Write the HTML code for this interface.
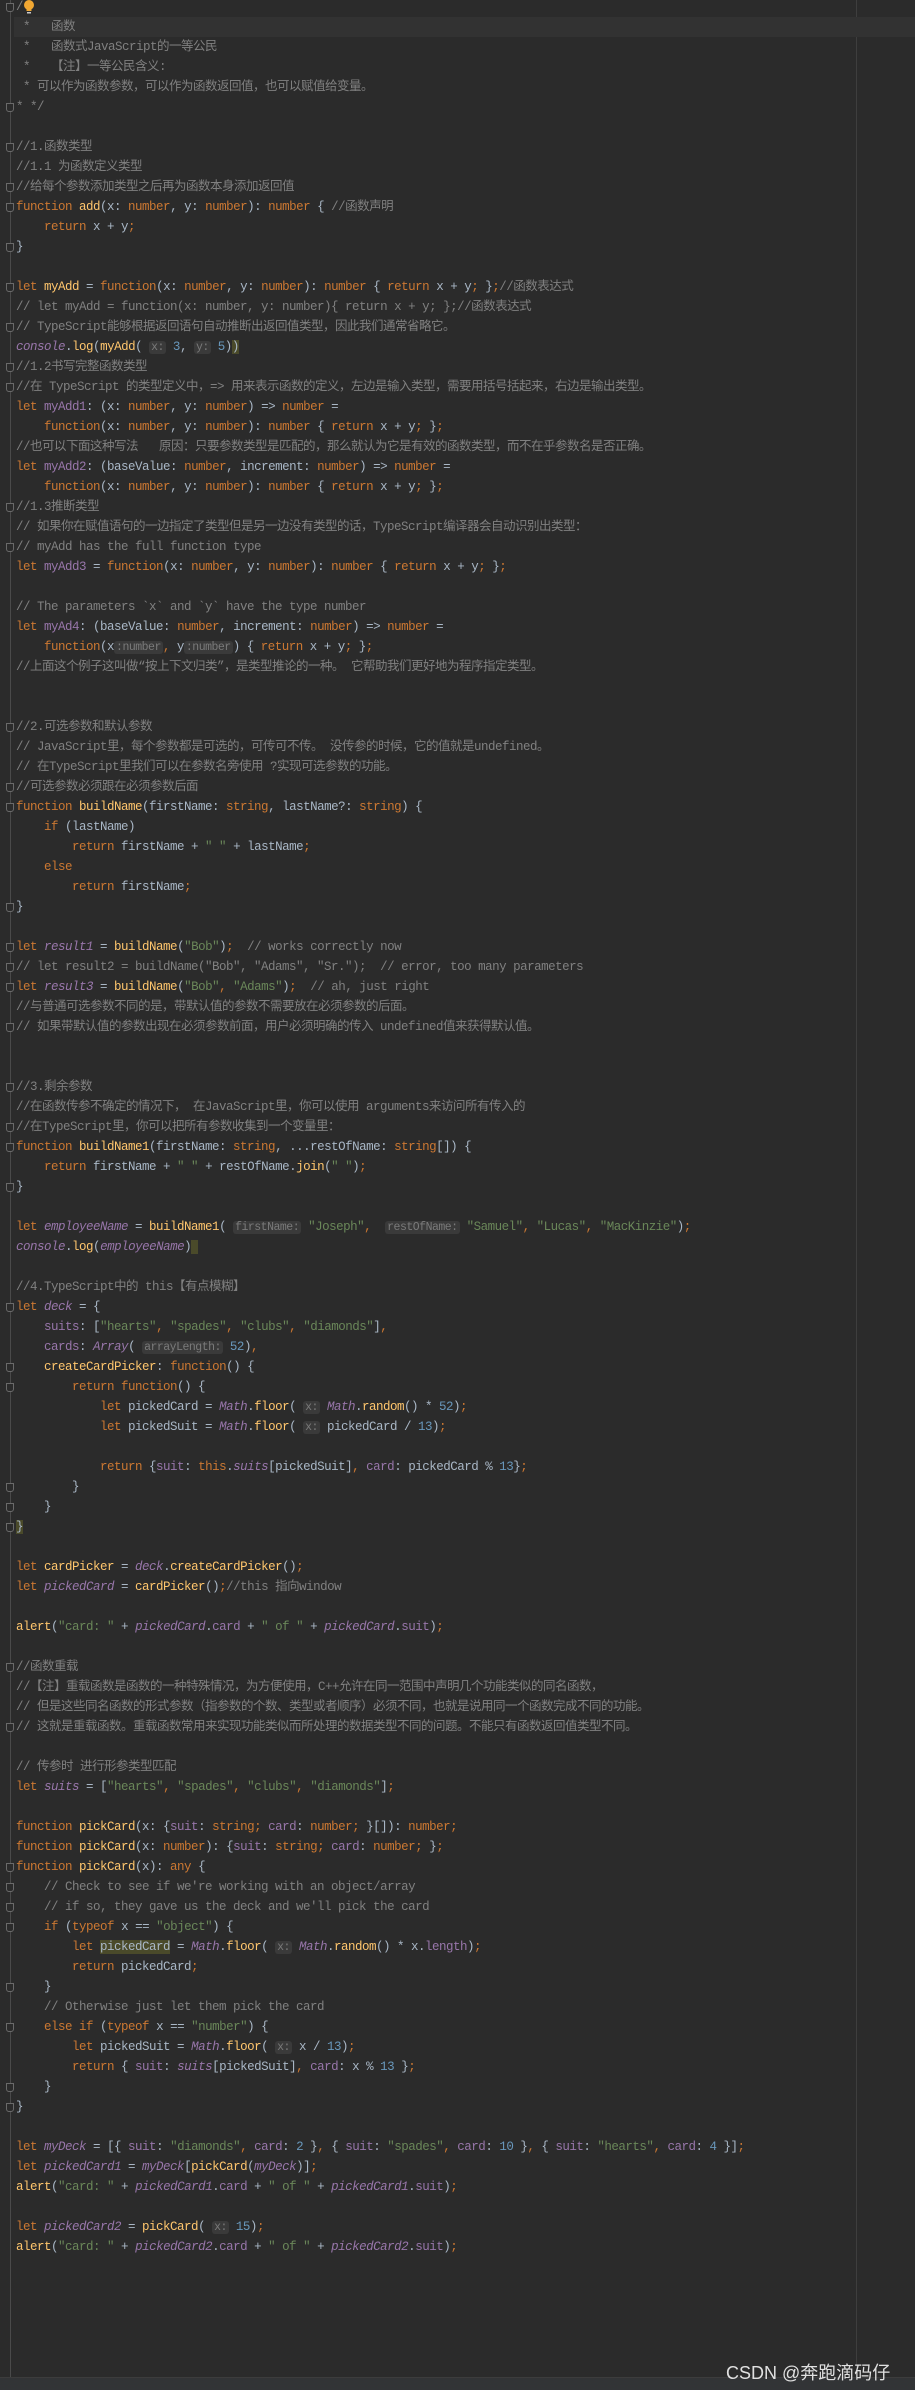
<!DOCTYPE html>
<html><head><meta charset="utf-8">
<style>
html,body{margin:0;padding:0;}
body{width:915px;height:2389px;background:#2b2b2b;position:relative;overflow:hidden;
font-family:"Liberation Mono","Noto Sans CJK SC",monospace;font-size:12.5px;letter-spacing:-0.5px;color:#a9b7c6;}
#gut{position:absolute;left:10px;top:0;width:1px;height:2377px;background:#4a4a4a;}
#rm{position:absolute;left:856px;top:0;width:1px;height:2377px;background:#3e3e3e;}
#code{position:absolute;left:16px;top:-3px;right:0;}
.l{height:20px;line-height:20px;white-space:pre;position:relative;}
.cur{background:#323232;margin-left:-2px;padding-left:2px;}
.fm::before{content:"";position:absolute;left:-10px;top:6px;width:6px;height:7px;border:1px solid #6a6a6a;border-radius:0 0 3px 3px;background:#2b2b2b;}
.k{color:#cc7832}.c{color:#808080}.s{color:#6a8759}.n{color:#6897bb}.f{color:#ffc66d}.p{color:#9876aa}.i{color:#9876aa;font-style:italic}
.h{background:#3a3a3a;color:#7a7a7a;border-radius:3px;padding:0 2px;font-size:11.5px;}
.m{background:#4a4a2a}
#bar{position:absolute;left:0;top:2377px;width:915px;height:12px;background:#323436;border-top:1px solid #3c3c3c;}
#wm{position:absolute;left:726px;top:2359px;font-family:"Liberation Sans","Noto Sans CJK SC",sans-serif;font-size:18px;color:#e0e0e0;letter-spacing:0;}
</style></head><body>
<div id="gut"></div><div id="rm"></div>
<div id="code">
<div class="l fm"><span class="c">/</span><svg style="position:absolute;left:7px;top:2px" width="12" height="16" viewBox="0 0 12 16"><circle cx="6" cy="6" r="5" fill="#f0a732"/><rect x="3.5" y="10" width="5" height="2" fill="#f0a732"/><rect x="4" y="13" width="4" height="1.5" fill="#c8c8c8"/></svg></div>
<div class="l cur c"> *   函数</div>
<div class="l c"> *   函数式JavaScript的一等公民</div>
<div class="l c"> *   【注】一等公民含义:</div>
<div class="l c"> * 可以作为函数参数，可以作为函数返回值，也可以赋值给变量。</div>
<div class="l fm c">* */</div>
<div class="l"></div>
<div class="l fm c">//1.函数类型</div>
<div class="l c">//1.1 为函数定义类型</div>
<div class="l fm c">//给每个参数添加类型之后再为函数本身添加返回值</div>
<div class="l fm"><span class="k">function </span><span class="f">add</span>(x: <span class="k">number</span>, y: <span class="k">number</span>): <span class="k">number</span> { <span class="c">//函数声明</span></div>
<div class="l">    <span class="k">return </span>x + y<span class="k">;</span></div>
<div class="l fm">}</div>
<div class="l"></div>
<div class="l fm"><span class="k">let </span><span class="f">myAdd</span> = <span class="k">function</span>(x: <span class="k">number</span>, y: <span class="k">number</span>): <span class="k">number</span> { <span class="k">return </span>x + y<span class="k">;</span> }<span class="k">;</span><span class="c">//函数表达式</span></div>
<div class="l c">// let myAdd = function(x: number, y: number){ return x + y; };//函数表达式</div>
<div class="l fm c">// TypeScript能够根据返回语句自动推断出返回值类型，因此我们通常省略它。</div>
<div class="l"><span class="i">console</span>.<span class="f">log</span>(<span class="f">myAdd</span>( <span class="h">x:</span> <span class="n">3</span>, <span class="h">y:</span> <span class="n">5</span>)<span class="m">)</span></div>
<div class="l fm c">//1.2书写完整函数类型</div>
<div class="l fm c">//在 TypeScript 的类型定义中，=> 用来表示函数的定义，左边是输入类型，需要用括号括起来，右边是输出类型。</div>
<div class="l"><span class="k">let </span><span class="p">myAdd1</span>: (x: <span class="k">number</span>, y: <span class="k">number</span>) => <span class="k">number</span> =</div>
<div class="l">    <span class="k">function</span>(x: <span class="k">number</span>, y: <span class="k">number</span>): <span class="k">number</span> { <span class="k">return </span>x + y<span class="k">;</span> }<span class="k">;</span></div>
<div class="l c">//也可以下面这种写法   原因：只要参数类型是匹配的，那么就认为它是有效的函数类型，而不在乎参数名是否正确。</div>
<div class="l"><span class="k">let </span><span class="p">myAdd2</span>: (baseValue: <span class="k">number</span>, increment: <span class="k">number</span>) => <span class="k">number</span> =</div>
<div class="l">    <span class="k">function</span>(x: <span class="k">number</span>, y: <span class="k">number</span>): <span class="k">number</span> { <span class="k">return </span>x + y<span class="k">;</span> }<span class="k">;</span></div>
<div class="l fm c">//1.3推断类型</div>
<div class="l c">// 如果你在赋值语句的一边指定了类型但是另一边没有类型的话，TypeScript编译器会自动识别出类型：</div>
<div class="l fm c">// myAdd has the full function type</div>
<div class="l"><span class="k">let </span><span class="p">myAdd3</span> = <span class="k">function</span>(x: <span class="k">number</span>, y: <span class="k">number</span>): <span class="k">number</span> { <span class="k">return </span>x + y<span class="k">;</span> }<span class="k">;</span></div>
<div class="l"></div>
<div class="l c">// The parameters `x` and `y` have the type number</div>
<div class="l"><span class="k">let </span><span class="p">myAd4</span>: (baseValue: <span class="k">number</span>, increment: <span class="k">number</span>) => <span class="k">number</span> =</div>
<div class="l">    <span class="k">function</span>(x<span class="h">:number</span><span class="k">,</span> y<span class="h">:number</span>) { <span class="k">return </span>x + y<span class="k">;</span> }<span class="k">;</span></div>
<div class="l c">//上面这个例子这叫做“按上下文归类”，是类型推论的一种。 它帮助我们更好地为程序指定类型。</div>
<div class="l"></div>
<div class="l"></div>
<div class="l fm c">//2.可选参数和默认参数</div>
<div class="l c">// JavaScript里，每个参数都是可选的，可传可不传。 没传参的时候，它的值就是undefined。</div>
<div class="l c">// 在TypeScript里我们可以在参数名旁使用 ?实现可选参数的功能。</div>
<div class="l fm c">//可选参数必须跟在必须参数后面</div>
<div class="l fm"><span class="k">function </span><span class="f">buildName</span>(firstName: <span class="k">string</span>, lastName?: <span class="k">string</span>) {</div>
<div class="l">    <span class="k">if </span>(lastName)</div>
<div class="l">        <span class="k">return </span>firstName + <span class="s">" "</span> + lastName<span class="k">;</span></div>
<div class="l">    <span class="k">else</span></div>
<div class="l">        <span class="k">return </span>firstName<span class="k">;</span></div>
<div class="l fm">}</div>
<div class="l"></div>
<div class="l fm"><span class="k">let </span><span class="i">result1</span> = <span class="f">buildName</span>(<span class="s">"Bob"</span>)<span class="k">;</span>  <span class="c">// works correctly now</span></div>
<div class="l fm c">// let result2 = buildName("Bob", "Adams", "Sr.");  // error, too many parameters</div>
<div class="l fm"><span class="k">let </span><span class="i">result3</span> = <span class="f">buildName</span>(<span class="s">"Bob"</span><span class="k">,</span> <span class="s">"Adams"</span>)<span class="k">;</span>  <span class="c">// ah, just right</span></div>
<div class="l c">//与普通可选参数不同的是，带默认值的参数不需要放在必须参数的后面。</div>
<div class="l fm c">// 如果带默认值的参数出现在必须参数前面，用户必须明确的传入 undefined值来获得默认值。</div>
<div class="l"></div>
<div class="l"></div>
<div class="l fm c">//3.剩余参数</div>
<div class="l c">//在函数传参不确定的情况下， 在JavaScript里，你可以使用 arguments来访问所有传入的</div>
<div class="l fm c">//在TypeScript里，你可以把所有参数收集到一个变量里：</div>
<div class="l fm"><span class="k">function </span><span class="f">buildName1</span>(firstName: <span class="k">string</span>, ...restOfName: <span class="k">string</span>[]) {</div>
<div class="l">    <span class="k">return </span>firstName + <span class="s">" "</span> + restOfName.<span class="f">join</span>(<span class="s">" "</span>)<span class="k">;</span></div>
<div class="l fm">}</div>
<div class="l"></div>
<div class="l"><span class="k">let </span><span class="i">employeeName</span> = <span class="f">buildName1</span>( <span class="h">firstName:</span> <span class="s">"Joseph"</span><span class="k">,</span>  <span class="h">restOfName:</span> <span class="s">"Samuel"</span><span class="k">,</span> <span class="s">"Lucas"</span><span class="k">,</span> <span class="s">"MacKinzie"</span>)<span class="k">;</span></div>
<div class="l"><span class="i">console</span>.<span class="f">log</span>(<span class="i">employeeName</span>)<span class="m"> </span></div>
<div class="l"></div>
<div class="l c">//4.TypeScript中的 this【有点模糊】</div>
<div class="l fm"><span class="k">let </span><span class="i">deck</span> = {</div>
<div class="l">    <span class="p">suits</span>: [<span class="s">"hearts"</span><span class="k">,</span> <span class="s">"spades"</span><span class="k">,</span> <span class="s">"clubs"</span><span class="k">,</span> <span class="s">"diamonds"</span>]<span class="k">,</span></div>
<div class="l">    <span class="p">cards</span>: <span class="i">Array</span>( <span class="h">arrayLength:</span> <span class="n">52</span>)<span class="k">,</span></div>
<div class="l fm">    <span class="f">createCardPicker</span>: <span class="k">function</span>() {</div>
<div class="l fm">        <span class="k">return function</span>() {</div>
<div class="l">            <span class="k">let </span>pickedCard = <span class="i">Math</span>.<span class="f">floor</span>( <span class="h">x:</span> <span class="i">Math</span>.<span class="f">random</span>() * <span class="n">52</span>)<span class="k">;</span></div>
<div class="l">            <span class="k">let </span>pickedSuit = <span class="i">Math</span>.<span class="f">floor</span>( <span class="h">x:</span> pickedCard / <span class="n">13</span>)<span class="k">;</span></div>
<div class="l"></div>
<div class="l">            <span class="k">return </span>{<span class="p">suit</span>: <span class="k">this</span>.<span class="i">suits</span>[pickedSuit]<span class="k">,</span> <span class="p">card</span>: pickedCard % <span class="n">13</span>}<span class="k">;</span></div>
<div class="l fm">        }</div>
<div class="l fm">    }</div>
<div class="l fm"><span class="m">}</span></div>
<div class="l"></div>
<div class="l"><span class="k">let </span><span class="f">cardPicker</span> = <span class="i">deck</span>.<span class="f">createCardPicker</span>()<span class="k">;</span></div>
<div class="l"><span class="k">let </span><span class="i">pickedCard</span> = <span class="f">cardPicker</span>()<span class="k">;</span><span class="c">//this 指向window</span></div>
<div class="l"></div>
<div class="l"><span class="f">alert</span>(<span class="s">"card: "</span> + <span class="i">pickedCard</span>.<span class="p">card</span> + <span class="s">" of "</span> + <span class="i">pickedCard</span>.<span class="p">suit</span>)<span class="k">;</span></div>
<div class="l"></div>
<div class="l fm c">//函数重载</div>
<div class="l c">//【注】重载函数是函数的一种特殊情况，为方便使用，C++允许在同一范围中声明几个功能类似的同名函数，</div>
<div class="l c">// 但是这些同名函数的形式参数（指参数的个数、类型或者顺序）必须不同，也就是说用同一个函数完成不同的功能。</div>
<div class="l fm c">// 这就是重载函数。重载函数常用来实现功能类似而所处理的数据类型不同的问题。不能只有函数返回值类型不同。</div>
<div class="l"></div>
<div class="l c">// 传参时 进行形参类型匹配</div>
<div class="l"><span class="k">let </span><span class="i">suits</span> = [<span class="s">"hearts"</span><span class="k">,</span> <span class="s">"spades"</span><span class="k">,</span> <span class="s">"clubs"</span><span class="k">,</span> <span class="s">"diamonds"</span>]<span class="k">;</span></div>
<div class="l"></div>
<div class="l"><span class="k">function </span><span class="f">pickCard</span>(x: {<span class="p">suit</span>: <span class="k">string;</span> <span class="p">card</span>: <span class="k">number;</span> }[]): <span class="k">number;</span></div>
<div class="l"><span class="k">function </span><span class="f">pickCard</span>(x: <span class="k">number</span>): {<span class="p">suit</span>: <span class="k">string;</span> <span class="p">card</span>: <span class="k">number;</span> }<span class="k">;</span></div>
<div class="l fm"><span class="k">function </span><span class="f">pickCard</span>(x): <span class="k">any</span> {</div>
<div class="l fm c">    // Check to see if we're working with an object/array</div>
<div class="l fm c">    // if so, they gave us the deck and we'll pick the card</div>
<div class="l fm">    <span class="k">if </span>(<span class="k">typeof </span>x == <span class="s">"object"</span>) {</div>
<div class="l">        <span class="k">let </span><span class="m">pickedCard</span> = <span class="i">Math</span>.<span class="f">floor</span>( <span class="h">x:</span> <span class="i">Math</span>.<span class="f">random</span>() * x.<span class="p">length</span>)<span class="k">;</span></div>
<div class="l">        <span class="k">return </span>pickedCard<span class="k">;</span></div>
<div class="l fm">    }</div>
<div class="l c">    // Otherwise just let them pick the card</div>
<div class="l fm">    <span class="k">else if </span>(<span class="k">typeof </span>x == <span class="s">"number"</span>) {</div>
<div class="l">        <span class="k">let </span>pickedSuit = <span class="i">Math</span>.<span class="f">floor</span>( <span class="h">x:</span> x / <span class="n">13</span>)<span class="k">;</span></div>
<div class="l">        <span class="k">return </span>{ <span class="p">suit</span>: <span class="i">suits</span>[pickedSuit]<span class="k">,</span> <span class="p">card</span>: x % <span class="n">13</span> }<span class="k">;</span></div>
<div class="l fm">    }</div>
<div class="l fm">}</div>
<div class="l"></div>
<div class="l"><span class="k">let </span><span class="i">myDeck</span> = [{ <span class="p">suit</span>: <span class="s">"diamonds"</span><span class="k">,</span> <span class="p">card</span>: <span class="n">2</span> }<span class="k">,</span> { <span class="p">suit</span>: <span class="s">"spades"</span><span class="k">,</span> <span class="p">card</span>: <span class="n">10</span> }<span class="k">,</span> { <span class="p">suit</span>: <span class="s">"hearts"</span><span class="k">,</span> <span class="p">card</span>: <span class="n">4</span> }]<span class="k">;</span></div>
<div class="l"><span class="k">let </span><span class="i">pickedCard1</span> = <span class="i">myDeck</span>[<span class="f">pickCard</span>(<span class="i">myDeck</span>)]<span class="k">;</span></div>
<div class="l"><span class="f">alert</span>(<span class="s">"card: "</span> + <span class="i">pickedCard1</span>.<span class="p">card</span> + <span class="s">" of "</span> + <span class="i">pickedCard1</span>.<span class="p">suit</span>)<span class="k">;</span></div>
<div class="l"></div>
<div class="l"><span class="k">let </span><span class="i">pickedCard2</span> = <span class="f">pickCard</span>( <span class="h">x:</span> <span class="n">15</span>)<span class="k">;</span></div>
<div class="l"><span class="f">alert</span>(<span class="s">"card: "</span> + <span class="i">pickedCard2</span>.<span class="p">card</span> + <span class="s">" of "</span> + <span class="i">pickedCard2</span>.<span class="p">suit</span>)<span class="k">;</span></div>
</div>
<div id="bar"></div>
<div id="wm">CSDN @奔跑滴码仔</div>
</body></html>
